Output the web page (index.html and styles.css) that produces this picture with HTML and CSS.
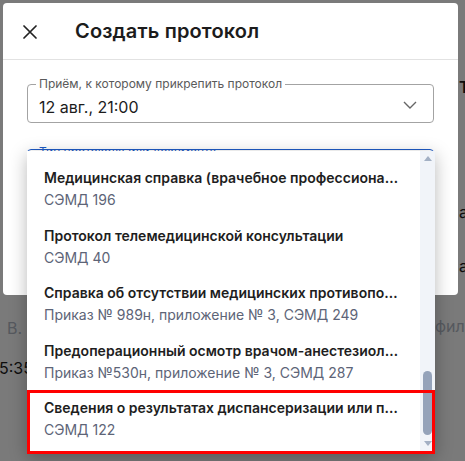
FILE: index.html
```html
<!DOCTYPE html>
<html lang="ru">
<head>
<meta charset="utf-8">
<link rel="stylesheet" href="styles.css">
</head>
<body>
<div class="page">
  <div class="page-left">
    <div class="bg-muted initials">В.</div>
    <div class="bg-dark time">5:35</div>
  </div>
  <div class="page-right">
    <div class="bg-dark cut cut-t">Т</div>
    <div class="bg-dark cut cut-a1">а</div>
    <div class="bg-dark cut cut-a2">а</div>
    <div class="bg-muted fila">фила</div>
  </div>
</div>
<div class="backdrop"></div>

<div class="modal">
  <div class="modal-header">
    <svg class="close" width="14" height="14" viewBox="0 0 14 14"><path d="M1 1L13 13M13 1L1 13" stroke="#222" stroke-width="1.7" fill="none" stroke-linecap="round"/></svg>
    <div class="modal-title">Создать протокол</div>
  </div>
  <div class="modal-body">
    <div class="field">
      <span class="field-label">Приём, к которому прикрепить протокол</span>
      <span class="field-value">12 авг., 21:00</span>
      <svg class="chevron" width="14" height="8" viewBox="0 0 14 8"><path d="M1 1L7 7L13 1" stroke="#666" stroke-width="1.4" fill="none"/></svg>
    </div>
    <div class="field field-focused">
      <span class="field-label field-label-blue">Тип протокола или документа</span>
    </div>
  </div>
</div>

<div class="dropdown">
  <div class="options">
    <div class="option">
      <div class="option-title">Медицинская справка (врачебное профессионально-консультативное заключение)</div>
      <div class="option-sub">СЭМД 196</div>
    </div>
    <div class="option">
      <div class="option-title">Протокол телемедицинской консультации</div>
      <div class="option-sub">СЭМД 40</div>
    </div>
    <div class="option">
      <div class="option-title">Справка об отсутствии медицинских противопоказаний</div>
      <div class="option-sub">Приказ № 989н, приложение № 3, СЭМД 249</div>
    </div>
    <div class="option">
      <div class="option-title">Предоперационный осмотр врачом-анестезиологом</div>
      <div class="option-sub">Приказ №530н, приложение № 3, СЭМД 287</div>
    </div>
    <div class="option">
      <div class="option-title">Сведения о результатах диспансеризации или профилактического осмотра</div>
      <div class="option-sub">СЭМД 122</div>
    </div>
  </div>
  <div class="scrollbar">
    <div class="arrow arrow-up"></div>
    <div class="track-space"></div>
    <div class="thumb"></div>
    <div class="arrow arrow-down"></div>
  </div>
</div>

<div class="highlight"></div>
</body>
</html>
```

FILE: styles.css
```css
* { box-sizing: border-box; }
html, body {
  margin: 0;
  width: 465px;
  height: 461px;
  overflow: hidden;
}
body {
  position: relative;
  font-family: Inter, "Noto Sans", sans-serif;
  background: #fff;
  color: #1f1f1f;
}

/* background page (dimmed) */
.page {
  display: flex;
  justify-content: space-between;
  height: 461px;
}
.page-left {
  width: 40px;
  padding-top: 318px;
}
.page-right {
  width: 30px;
  padding-top: 77px;
}
.bg-dark { color: #1c1c1c; }
.bg-muted { color: #b4bac6; }
.initials {
  font-size: 16px;
  line-height: 20px;
  padding-left: 7px;
}
.time {
  font-size: 16px;
  line-height: 20px;
  margin-top: 20px;
  margin-left: -1px;
}
.cut {
  padding-left: 24px;
  font-size: 16px;
  line-height: 20px;
}
.cut-t { font-weight: 600; }
.cut-a1 { margin-top: 105px; }
.cut-a2 { margin-top: 34px; }
.fila {
  font-size: 16px;
  line-height: 20px;
  margin-top: 40px;
}

.backdrop {
  position: absolute;
  inset: 0;
  background: rgba(0, 0, 0, 0.52);
}

/* modal */
.modal {
  position: absolute;
  left: 3px;
  top: 3px;
  width: 455px;
  height: 292px;
  background: #fff;
  border-radius: 4px;
}
.modal-header {
  height: 57px;
  display: flex;
  align-items: center;
  padding-left: 20px;
  border-bottom: 1px solid #e2e2e2;
}
.close { flex: none; margin-top: 1px; }
.modal-title {
  margin-left: 38px;
  font-size: 20px;
  font-weight: 600;
  letter-spacing: 0.15px;
  color: #1c1c1c;
}
.modal-body {
  padding: 24px 24px 0 24px;
  display: flex;
  flex-direction: column;
  gap: 26px;
}
.field {
  position: relative;
  height: 39px;
  border: 1px solid #a3a3a3;
  border-radius: 4px;
  display: flex;
  align-items: center;
  padding: 6px 12px 0 11px;
}
.field-label {
  position: absolute;
  left: 8px;
  top: -8px;
  padding: 0 3px;
  background: #fff;
  font-size: 12px;
  line-height: 14px;
  color: #5a5a5a;
}
.field-value {
  flex: 1;
  font-size: 16px;
  line-height: 20px;
  color: #1c1c1c;
}
.chevron { flex: none; margin-top: -4px; margin-right: 4px; }
.field-focused {
  border: 1px solid #1e5bc6;
  height: 140px;
}
.field-label-blue {
  color: #1e5bc6;
  top: -5px;
  background: transparent;
}

/* dropdown */
.dropdown {
  position: absolute;
  left: 27px;
  top: 151px;
  width: 408px;
  height: 303px;
  background: #fff;
  display: flex;
  box-shadow: 0 4px 18px rgba(0, 0, 0, 0.28);
  border-radius: 0 0 4px 4px;
}
.options {
  flex: 1;
  min-width: 0;
  padding-top: 9px;
  overflow: hidden;
}
.option {
  height: 57.5px;
  padding: 8px 17px 0 17px;
}
.option-title {
  font-size: 14px;
  line-height: 20px;
  font-weight: 600;
  color: #1e1e1e;
  white-space: nowrap;
  overflow: hidden;
  text-overflow: ellipsis;
}
.option-sub {
  margin-top: 2px;
  font-size: 14px;
  line-height: 20px;
  color: #5d6477;
  white-space: nowrap;
}
.scrollbar {
  flex: none;
  width: 15px;
  background: #f1f4f9;
  display: flex;
  flex-direction: column;
  align-items: center;
  padding: 5px 0 8px 0;
}
.arrow {
  width: 0;
  height: 0;
  border-left: 4.5px solid transparent;
  border-right: 4.5px solid transparent;
}
.arrow-up { border-bottom: 5px solid #a3b0c4; }
.arrow-down { border-top: 5px solid #a3b0c4; margin-top: 6px; }
.track-space { flex: 1; }
.thumb {
  width: 9px;
  height: 64px;
  border-radius: 5px;
  background: #95a3ba;
}

/* annotation */
.highlight {
  position: absolute;
  left: 27px;
  top: 390px;
  width: 408px;
  height: 64px;
  border: 3px solid #ff0000;
}
```
